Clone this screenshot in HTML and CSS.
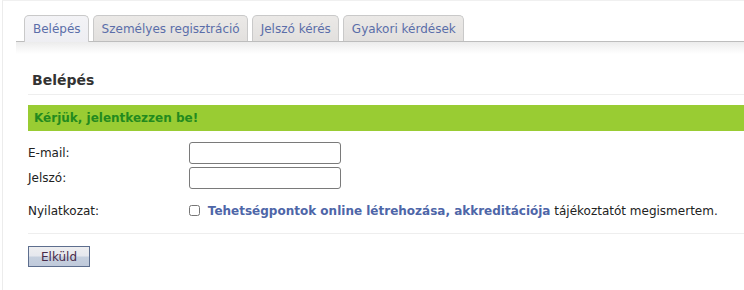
FILE: index.html
```html
<!DOCTYPE html>
<html lang="hu">
<head>
    <meta charset="UTF-8">
    <title>Belépés</title>
    <link rel="stylesheet" href="styles.css">
</head>
<body>
    <div class="page">
        <ul class="tabs">
            <li class="active"><a href="#">Belépés</a></li>
            <li><a href="#">Személyes regisztráció</a></li>
            <li><a href="#">Jelszó kérés</a></li>
            <li><a href="#">Gyakori kérdések</a></li>
        </ul>
        <div class="panel">
            <h2>Belépés</h2>
            <div class="notice">Kérjük, jelentkezzen be!</div>
            <form class="login">
                <label for="email">E-mail:</label>
                <input type="text" id="email">
                <label for="pass">Jelszó:</label>
                <input type="password" id="pass">
                <label class="decl">Nyilatkozat:</label>
                <div class="decl-text">
                    <input type="checkbox" id="accept">
                    <a href="#">Tehetségpontok online létrehozása, akkreditációja</a> tájékoztatót megismertem.
                </div>
            </form>
            <div class="actions">
                <button type="button">Elküld</button>
            </div>
        </div>
    </div>
</body>
</html>
```

FILE: styles.css
```css
body {
    margin: 0;
    font-family: "DejaVu Sans", Verdana, sans-serif;
    font-size: 12px;
    color: #222;
    background: #fff;
}

.page {
    margin-left: 2px;
    border-left: 1px solid #ececec;
    border-top: 1px solid #f0f0f0;
    padding-left: 13px;
    height: 289px;
}

.tabs {
    list-style: none;
    margin: 14px 0 0 0;
    padding: 0 0 0 8px;
    display: flex;
    gap: 4px;
    border-bottom: 1px solid #bdbdbd;
}

.tabs li {
    height: 25px;
    border: 1px solid #c9c9c9;
    border-bottom: none;
    border-radius: 5px 5px 0 0;
    background: linear-gradient(#ebe9e7, #e2e0de);
}

.tabs li.active {
    background: linear-gradient(#f3f3f6, #eeeef2);
    margin-bottom: -1px;
    height: 26px;
}

.tabs a {
    display: block;
    padding: 0 7px 0 8px;
    line-height: 27px;
    font-size: 12px;
    color: #5b6ea9;
    text-decoration: none;
}

.panel {
    padding: 10px 0 0 12px;
    background: linear-gradient(#ececec, #fff 12px);
}

.panel h2 {
    margin: 20px 0 0 0;
    padding: 0 0 6px 4px;
    font-size: 14px;
    color: #333;
    border-bottom: 1px solid #eeeeee;
}

.notice {
    margin-top: 10px;
    height: 26px;
    line-height: 26px;
    padding-left: 6px;
    background: #99cc33;
    color: #238a1e;
    font-weight: bold;
    font-size: 12px;
}

.login {
    display: grid;
    grid-template-columns: 161px 1fr;
    row-gap: 3px;
    align-items: center;
    margin-top: 11px;
    padding-bottom: 15px;
    border-bottom: 1px solid #eeeeee;
}

.login input[type="text"],
.login input[type="password"] {
    width: 152px;
    height: 22px;
    box-sizing: border-box;
    margin: 0;
    border: 1px solid #7a7a7a;
    border-radius: 3px;
}

.login .decl {
    margin-top: 12px;
}

.decl-text {
    margin-top: 12px;
    color: #222;
}

.decl-text input {
    width: 11px;
    height: 11px;
    margin: 0 4px 0 0;
    vertical-align: -1px;
    accent-color: #9a9a9a;
}

.decl-text a {
    color: #4e66a8;
    font-weight: bold;
    text-decoration: none;
}

.actions {
    padding-top: 12px;
}

button {
    width: 62px;
    height: 21px;
    padding: 0;
    font-family: "DejaVu Sans", Verdana, sans-serif;
    font-size: 12px;
    color: #4a2b4a;
    border: 1px solid #5d6e8e;
    background: linear-gradient(#eeeef0 0%, #e6e8ee 45%, #c5cfde 55%, #c0cadb 100%);
    cursor: pointer;
}
```
